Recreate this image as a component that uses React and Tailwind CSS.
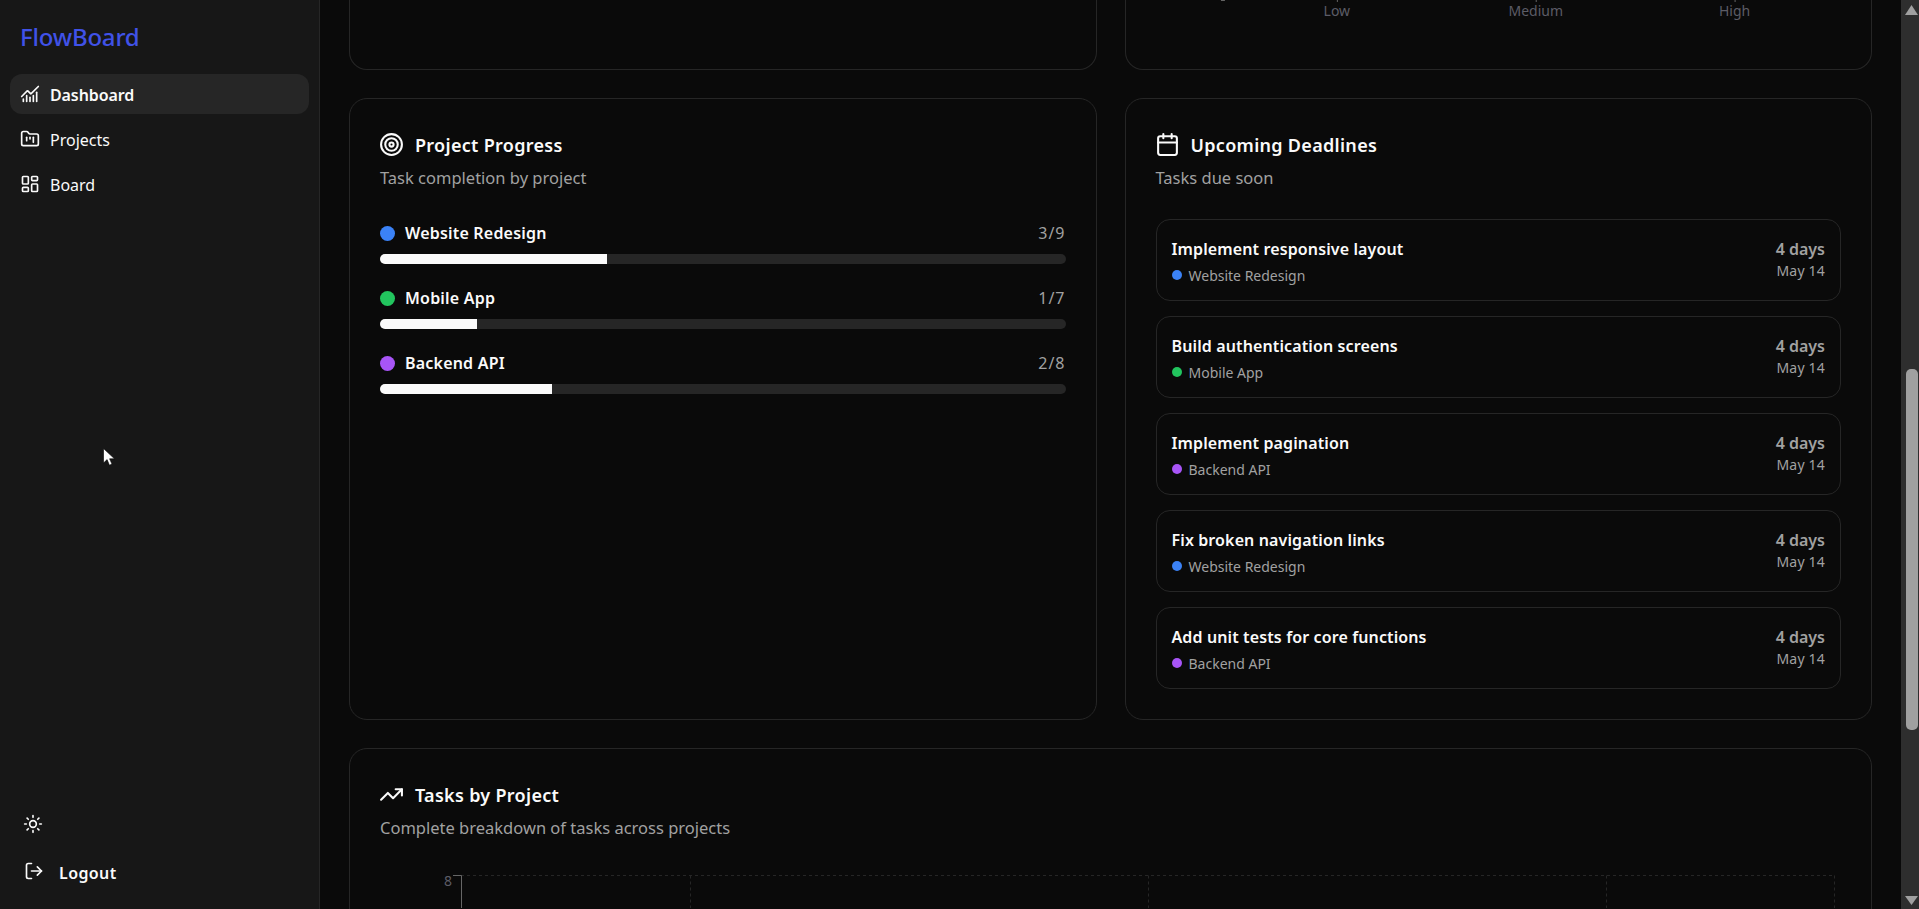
import { ChartNoAxesCombined, FolderKanban, LayoutDashboard, Target, Calendar, TrendingUp, Sun, LogOut } from 'lucide-react';

const navItems = [
  { label: 'Dashboard', icon: ChartNoAxesCombined, active: true },
  { label: 'Projects', icon: FolderKanban },
  { label: 'Board', icon: LayoutDashboard },
];

const progress = [
  { name: 'Website Redesign', dot: 'bg-[#3b82f6]', done: '3/9', bar: 'w-[33.1%]' },
  { name: 'Mobile App', dot: 'bg-[#22c55e]', done: '1/7', bar: 'w-[14.1%]' },
  { name: 'Backend API', dot: 'bg-[#a855f7]', done: '2/8', bar: 'w-[25.1%]' },
];

const deadlines = [
  { title: 'Implement responsive layout', project: 'Website Redesign', dot: 'bg-[#3b82f6]' },
  { title: 'Build authentication screens', project: 'Mobile App', dot: 'bg-[#22c55e]' },
  { title: 'Implement pagination', project: 'Backend API', dot: 'bg-[#a855f7]' },
  { title: 'Fix broken navigation links', project: 'Website Redesign', dot: 'bg-[#3b82f6]' },
  { title: 'Add unit tests for core functions', project: 'Backend API', dot: 'bg-[#a855f7]' },
];

function CardHeader({ icon: Icon, title, subtitle }) {
  return (
    <div className="flex flex-col">
      <div className="flex h-[24px] items-center gap-[11px]">
        <Icon className="ml-[-1px] h-[25px] w-[25px] shrink-0 text-[#fafafa]" strokeWidth={2} />
        <h2 className="pt-[2px] text-[18px] font-semibold tracking-[0.3px] text-[#fafafa]">{title}</h2>
      </div>
      <p className="mt-[10px] h-[24px] text-[16.5px] leading-[24px] text-[#a1a1a1]">{subtitle}</p>
    </div>
  );
}

function Sidebar() {
  return (
    <aside className="flex h-full w-[320px] shrink-0 flex-col border-r border-[#262626] bg-[#171717]">
      <div className="flex h-[74px] items-center pb-[1px] pl-[20px]">
        <span className="text-[24px] font-medium tracking-[-0.2px] text-[#4052e8]">FlowBoard</span>
      </div>
      <nav className="flex flex-col gap-[5px] px-[10px]">
        {navItems.map(item => (
          <div
            key={item.label}
            className={`flex h-[40px] items-center gap-[10px] rounded-[12px] pl-[10px] text-[16px] text-[#fafafa] ${item.active ? 'bg-[#262626] font-semibold tracking-[-0.1px]' : ''}`}
          >
            <item.icon className="h-[20px] w-[20px]" strokeWidth={2} />
            <span className="pt-[2px]">{item.label}</span>
          </div>
        ))}
      </nav>
      <div className="mt-auto flex flex-col pb-[26px] pl-[23px]">
        <Sun className="h-[20px] w-[20px] text-[#fafafa]" strokeWidth={2} />
        <div className="ml-[1px] mt-[25px] flex h-[24px] items-center gap-[15px] text-[16px] font-semibold tracking-[0.4px] text-[#fafafa]">
          <LogOut className="h-[20px] w-[20px]" strokeWidth={2} />
          <span className="pt-[4px]">Logout</span>
        </div>
      </div>
    </aside>
  );
}

function PriorityChartEnd() {
  return (
    <svg className="block h-full w-full" viewBox="0 0 746 69">
      <g stroke="#666666" strokeWidth="1">
        <line x1="211.5" y1="0" x2="211.5" y2="2" />
        <line x1="410.5" y1="0" x2="410.5" y2="2" />
        <line x1="609.5" y1="0" x2="609.5" y2="2" />
      </g>
      <path d="M95 0.5h4" stroke="#666666" strokeWidth="1" />
      <g fill="#5c5c66" fontSize="14" textAnchor="middle">
        <text x="211" y="16">Low</text>
        <text x="410" y="16">Medium</text>
        <text x="609" y="16">High</text>
      </g>
    </svg>
  );
}

function TasksChart() {
  return (
    <svg className="block h-[40px] w-full" viewBox="0 0 1521 40">
      <g stroke="#262626" strokeDasharray="3 3">
        <line x1="111" y1="7.5" x2="1485" y2="7.5" />
        <line x1="340.5" y1="7.5" x2="340.5" y2="40" />
        <line x1="798.5" y1="7.5" x2="798.5" y2="40" />
        <line x1="1256.5" y1="7.5" x2="1256.5" y2="40" />
        <line x1="1484.5" y1="7.5" x2="1484.5" y2="40" />
      </g>
      <path d="M103 7.5h8.5V40" fill="none" stroke="#666666" />
      <text x="98" y="18" fill="#5c5c66" fontSize="14" textAnchor="middle">8</text>
    </svg>
  );
}

function Scrollbar() {
  return (
    <div className="flex h-full w-[18px] shrink-0 flex-col items-center bg-[#2e2e2e] pl-[3px]">
      <svg className="mt-[5px] h-[10px] w-[13px] shrink-0" viewBox="0 0 13 10">
        <path d="M6.5 0 13 10H0z" fill="#a0a0a0" />
      </svg>
      <div className="mt-[354px] h-[361px] w-[12px] shrink-0 rounded-[5px] bg-[#a0a0a0]" />
      <svg className="mb-[4px] mt-auto h-[9px] w-[13px] shrink-0" viewBox="0 0 13 9">
        <path d="M0 0h13L6.5 9z" fill="#a0a0a0" />
      </svg>
    </div>
  );
}

export default function App() {
  return (
    <div className="relative flex h-[909px] w-full overflow-hidden bg-[#0a0a0a] font-['Noto_Sans',sans-serif]">
      <Sidebar />

      <main className="flex min-w-0 flex-1 flex-col gap-[28px] overflow-hidden pl-[29px] pr-[29px]">
        {/* Card tails left over from the scrolled-off row */}
        <div className="mb-[1px] grid h-[69px] shrink-0 grid-cols-2 gap-[28px]">
          <div className="rounded-b-[18px] border border-t-0 border-[#262626]" />
          <div className="rounded-b-[18px] border border-t-0 border-[#262626]">
            <PriorityChartEnd />
          </div>
        </div>

        <div className="grid h-[622px] shrink-0 grid-cols-2 gap-[28px]">
          <section className="rounded-[18px] border border-[#262626] px-[30px] pt-[33px]">
            <CardHeader icon={Target} title="Project Progress" subtitle="Task completion by project" />
            <div className="mt-[31px] flex flex-col gap-[22px]">
              {progress.map(p => (
                <div key={p.name}>
                  <div className="flex h-[24px] items-center">
                    <span className={`h-[15px] w-[15px] rounded-full ${p.dot}`} />
                    <span className="ml-[10px] text-[16px] font-semibold tracking-[0.2px] text-[#fafafa]">{p.name}</span>
                    <span className="ml-auto text-[16px] tracking-[1px] text-[#a1a1a1]">{p.done}</span>
                  </div>
                  <div className="mt-[9px] h-[10px] overflow-hidden rounded-full bg-[#262626]">
                    <div className={`h-full bg-[#fafafa] ${p.bar}`} />
                  </div>
                </div>
              ))}
            </div>
          </section>

          <section className="rounded-[18px] border border-[#262626] px-[30px] pt-[33px]">
            <CardHeader icon={Calendar} title="Upcoming Deadlines" subtitle="Tasks due soon" />
            <div className="mt-[29px] flex flex-col gap-[15px]">
              {deadlines.map(d => (
                <div key={d.title} className="flex h-[82px] items-start justify-between rounded-[14px] border border-[#262626] px-[15px] pt-[17px]">
                  <div>
                    <p className="h-[24px] text-[16px] font-semibold leading-[24px] tracking-[0.12px] text-[#fafafa]">{d.title}</p>
                    <div className="mt-[3px] flex h-[22px] items-center gap-[7px]">
                      <span className={`h-[10px] w-[10px] rounded-full ${d.dot}`} />
                      <span className="text-[14px] text-[#a1a1a1]">{d.project}</span>
                    </div>
                  </div>
                  <div className="text-right text-[#a1a1a1]">
                    <p className="h-[24px] text-[16px] font-semibold leading-[24px]">4 days</p>
                    <p className="h-[20px] text-[14px] leading-[20px] tracking-[0.2px]">May 14</p>
                  </div>
                </div>
              ))}
            </div>
          </section>
        </div>

        <section className="min-h-[200px] shrink-0 rounded-t-[18px] border border-[#262626] pt-[33px]">
          <div className="px-[30px]">
            <CardHeader icon={TrendingUp} title="Tasks by Project" subtitle="Complete breakdown of tasks across projects" />
          </div>
          <div className="mt-[28px]">
            <TasksChart />
          </div>
        </section>
      </main>

      <Scrollbar />

      {/* Mouse pointer caught in the capture */}
      <svg className="absolute left-[103px] top-[448px] h-[18px] w-[12px]" viewBox="0 0 12 18">
        <path d="M0.5 0.5v14.5l3.6-3.4 2.3 5.6 2.6-1.1-2.4-5.3h4.9z" fill="#ffffff" stroke="#000000" strokeWidth="0.6" />
      </svg>
    </div>
  );
}
